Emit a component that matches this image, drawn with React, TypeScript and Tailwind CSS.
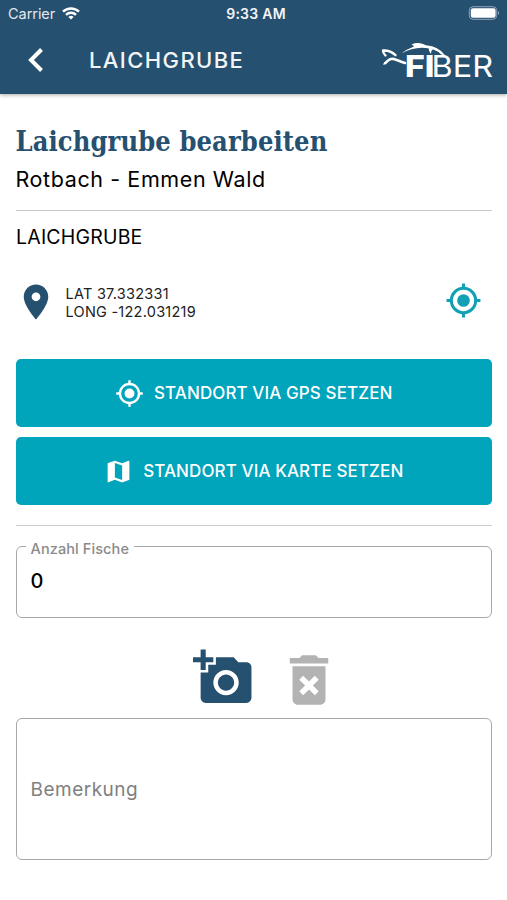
import React from 'react'
import { MdAddAPhoto, MdDeleteForever, MdLocationOn, MdMap } from 'react-icons/md'

const StatusBar: React.FC = () => (
  <div className="flex h-7 items-center justify-between pl-2 pr-[7px] text-white">
    <div className="flex w-[110px] items-center gap-[7px]">
      <span className="text-[14.5px] tracking-[-0.05px] text-gray-200">Carrier</span>
      <svg className="-mt-0.5" width="18" height="13" viewBox="0 0 18 13" fill="none" stroke="white" strokeWidth="2.4">
        <path d="M1 4.7a11.5 11.5 0 0 1 16 0" />
        <path d="M4 7.8a7.2 7.2 0 0 1 10 0" />
        <path d="M6.4 10a3.8 3.8 0 0 1 5.2 0L9 12.6z" fill="white" stroke="none" />
      </svg>
    </div>
    <span className="-mt-px ml-1 text-[14px] font-semibold tracking-[0.25px] text-gray-100">9:33 AM</span>
    <div className="flex w-[110px] justify-end">
      <svg className="-mt-0.5" width="32" height="14" viewBox="0 0 32 14">
        <rect x="1.3" y="0.7" width="27.4" height="12.6" rx="3.8" fill="none" stroke="#8fa6ba" />
        <rect x="2.8" y="2.2" width="24.8" height="9.6" rx="2.2" fill="white" />
        <path d="M30 5v4c1.6-.6 1.6-3.4 0-4z" fill="#8fa6ba" />
      </svg>
    </div>
  </div>
)

const Logo: React.FC = () => (
  <svg width="114" height="48" viewBox="0 -4 114 48" fill="white">
    {/* tail */}
    <g fill="none" stroke="white" strokeLinecap="round" strokeLinejoin="round">
      <path d="M4.5 14.5Q2 12 2 9.500q7-.5 12.500 4.700" strokeWidth="2.4" />
      <path d="M4.500 22Q8 17.500 12 17.700q4 1.300 12 4.300" strokeWidth="2.6" />
      <path d="M3 23.200l1-1.500" strokeWidth="1.5" />
    </g>
    {/* back and fins */}
    <path d="M20.500 12.500q5.500-4.500 12.500-7-1-1.500-2.500-2Q36 .8 42 3l3 1.300q13 1.200 19 10l-4-.8Q54 6.800 41 6.800q-11 .2-20.500 5.700z" />
    <path d="M47.500 6q0 4.500 2.500 7 .2-4 2.500-5.500z" />
    <text x="24" y="36" textLength="29.5" lengthAdjust="spacingAndGlyphs" fontFamily="Inter, sans-serif" fontSize="29.5" fontWeight="800">FI</text>
    <text x="50.5" y="36" textLength="61.5" lengthAdjust="spacingAndGlyphs" fontFamily="Inter, sans-serif" fontSize="29.5" fontWeight="400">BER</text>
  </svg>
)

const TargetIcon: React.FC<{ size: number, className?: string }> = ({ size, className }) => (
  <svg className={className} width={size} height={size} viewBox="0 0 24 24" fill="none" stroke="currentColor" strokeWidth="2">
    <circle cx="12" cy="12" r="4.1" fill="currentColor" stroke="none" />
    <circle cx="12" cy="12" r="7.9" />
    <path d="M12 1v3M12 20v3M1 12h3M20 12h3" />
  </svg>
)

const ActionButton: React.FC<{ icon: React.ReactNode, label: string }> = ({ icon, label }) => (
  <button className="flex h-[68px] w-full items-center justify-center gap-2.5 rounded-[5px] bg-[#00a4bb] text-[17px] font-medium tracking-[0.1px] text-white">
    {icon}
    <span className="pt-0.5">{label}</span>
  </button>
)

function App() {
  return (
    <div className="h-[900px] w-[507px] overflow-hidden bg-white font-['Inter',sans-serif] text-black">
      <header className="h-[94px] bg-[#265070] shadow-[0_1px_4px_rgba(0,0,0,0.35)]">
        <StatusBar />
        <div className="flex h-[66px] items-center pl-[27px] pr-[12px]">
          <svg className="-mt-0.5" width="17" height="26" viewBox="0 0 17 26" fill="none" stroke="white" strokeWidth="4">
            <path d="M14.5 2.5 4 13l10.5 10.5" />
          </svg>
          <h1 className="-mt-0.5 ml-[45px] flex-1 text-[22px] font-medium tracking-[1.4px] text-gray-100">LAICHGRUBE</h1>
          <Logo />
        </div>
      </header>

      <main className="pl-[15.5px] pr-[15px] pt-[28px]">
        <h2 className="h-[38px] whitespace-nowrap font-['DejaVu_Serif_Condensed','DejaVu_Serif',serif] text-[27px] font-bold leading-[39px] tracking-[0.1px] text-[#265070]">Laichgrube bearbeiten</h2>
        <p className="h-[38px] text-[21.5px] leading-[38px] tracking-[0.6px]">Rotbach - Emmen Wald</p>
        <hr className="mt-3 border-[#c8c8c8]" />
        <h3 className="mt-3 pl-[0.5px] text-[19.5px] leading-7 tracking-[0.2px]">LAICHGRUBE</h3>

        <div className="mt-7 flex h-[46px] items-center">
          <MdLocationOn className="-ml-px shrink-0" color="#265070" size={42} />
          <div className="ml-[9px] flex-1 pt-0.5 text-[14.5px] leading-[18px] tracking-[0.25px] text-[#222]">
            <p>LAT 37.332331</p>
            <p>LONG -122.031219</p>
          </div>
          <TargetIcon className="-mt-1 mr-[10.5px] text-[#12a0b4]" size={37} />
        </div>

        <div className="mt-[34px] flex flex-col gap-2.5">
          <ActionButton icon={<TargetIcon size={29} />} label="STANDORT VIA GPS SETZEN" />
          <ActionButton icon={<MdMap size={29} />} label="STANDORT VIA KARTE SETZEN" />
        </div>

        <hr className="mt-5 border-[#cfcfcf]" />

        {/* outlined number field */}
        <fieldset className="mt-[13px] h-[79px] rounded-[6px] border border-[#a8a8a8] pl-[9px]">
          <legend className="px-[5px] text-[14.5px] font-medium leading-[14px] tracking-[0.1px] text-[#8a8a8a]"><span className="relative top-[3px]">Anzahl Fische</span></legend>
          <p className="pl-[5px] pt-[14px] text-[20px] font-medium leading-7">0</p>
        </fieldset>

        <div className="mt-[29px] flex h-[65px] justify-center gap-[22px] pl-[28px]">
          <MdAddAPhoto color="#265070" size={61} />
          <MdDeleteForever color="#b3b3b3" size={66} />
        </div>

        <div className="mt-[6px] flex h-[142px] items-center rounded-[6px] border border-[#a8a8a8] pl-[14px] pt-[3px] text-[19px] tracking-[0.5px] text-[#808080]">
          Bemerkung
        </div>
      </main>
    </div>
  )
}

export default App
